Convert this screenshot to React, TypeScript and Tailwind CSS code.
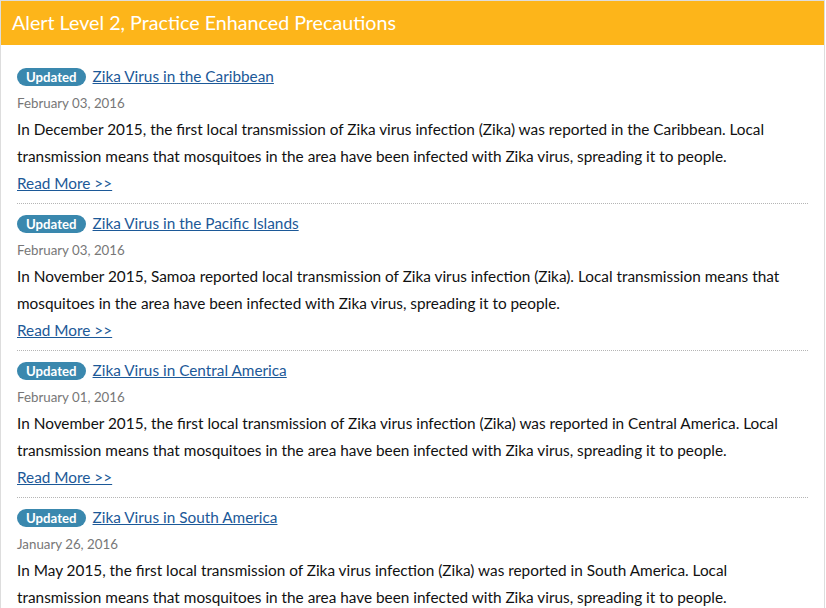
const items = [
  {
    title: "Zika Virus in the Caribbean",
    date: "February 03, 2016",
    body: "In December 2015, the first local transmission of Zika virus infection (Zika) was reported in the Caribbean. Local transmission means that mosquitoes in the area have been infected with Zika virus, spreading it to people.",
  },
  {
    title: "Zika Virus in the Pacific Islands",
    date: "February 03, 2016",
    body: "In November 2015, Samoa reported local transmission of Zika virus infection (Zika). Local transmission means that mosquitoes in the area have been infected with Zika virus, spreading it to people.",
  },
  {
    title: "Zika Virus in Central America",
    date: "February 01, 2016",
    body: "In November 2015, the first local transmission of Zika virus infection (Zika) was reported in Central America. Local transmission means that mosquitoes in the area have been infected with Zika virus, spreading it to people.",
  },
  {
    title: "Zika Virus in South America",
    date: "January 26, 2016",
    body: "In May 2015, the first local transmission of Zika virus infection (Zika) was reported in South America. Local transmission means that mosquitoes in the area have been infected with Zika virus, spreading it to people.",
  },
];

export default function App() {
  return (
    <div className="bg-white font-['Lato','Noto_Sans',sans-serif] h-[608px] overflow-hidden">
      <div className="w-[825px] border border-[#dddddd]">
        {/* Header */}
        <div className="h-[44px] bg-[#fdb51a] px-[11px] flex items-center text-white text-[19.7px]">
          Alert Level 2, Practice Enhanced Precautions
        </div>

        {/* Items */}
        <div className="px-[16px] pt-[18px]">
          {items.map((item, i) => (
            <div key={i} className="border-b border-dotted border-[#b5b5b5] pb-[6px] mb-[6px]">
              <div className="flex items-center h-[27px]">
                <span className="inline-block h-[18px] leading-[18px] px-[9px] rounded-full bg-[#3a88ae] text-white text-[13.2px] font-bold">
                  Updated
                </span>
                <a href="#" className="ml-[7px] text-[15.35px] text-[#1c5998] underline">
                  {item.title}
                </a>
              </div>
              <div className="text-[13.3px] leading-[26px] text-[#777777]">{item.date}</div>
              <p className="text-[15.35px] leading-[27px] text-[#111111]">{item.body}</p>
              <a href="#" className="block text-[15.35px] leading-[27px] text-[#1c5998] underline w-fit">
                Read More &gt;&gt;
              </a>
            </div>
          ))}
        </div>
      </div>
    </div>
  );
}
